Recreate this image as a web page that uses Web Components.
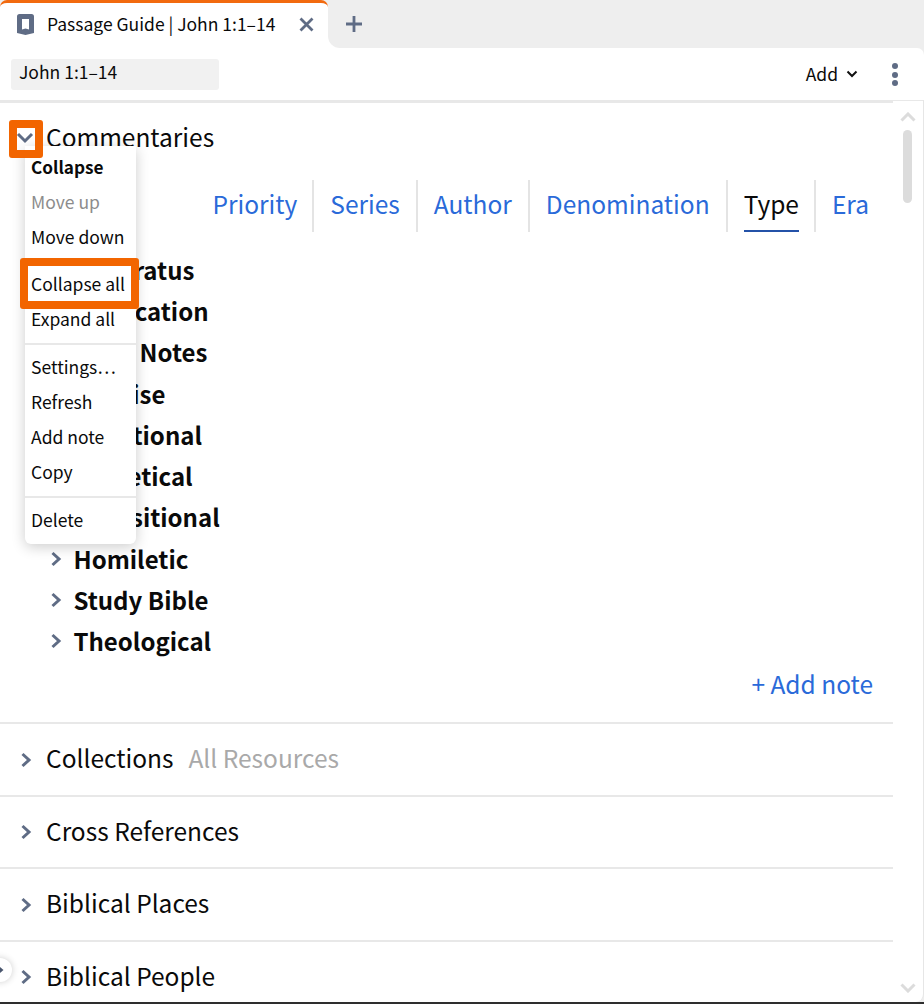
<!DOCTYPE html>
<html lang="en"><head><meta charset="utf-8"><title>Passage Guide</title>
<style>
html,body{margin:0;height:100%;background:#fff}
body{font-family:"Noto Sans CJK SC","Noto Sans",sans-serif;color:#0a0a0a;overflow:hidden}
</style></head><body>
<guide-app>
  <guide-tabbar title-text="Passage Guide | John 1:1–14"></guide-tabbar>
  <guide-toolbar reference="John 1:1–14"></guide-toolbar>
  <guide-scroll>
    <guide-section open label="Commentaries">
      <type-tabs></type-tabs>
      <tree-item>Apparatus</tree-item>
      <tree-item>Application</tree-item>
      <tree-item>Bible Notes</tree-item>
      <tree-item>Concise</tree-item>
      <tree-item>Devotional</tree-item>
      <tree-item>Exegetical</tree-item>
      <tree-item>Expositional</tree-item>
      <tree-item>Homiletic</tree-item>
      <tree-item>Study Bible</tree-item>
      <tree-item>Theological</tree-item>
      <add-note></add-note>
    </guide-section>
    <guide-section label="Collections" note="All Resources"></guide-section>
    <guide-section label="Cross References"></guide-section>
    <guide-section label="Biblical Places"></guide-section>
    <guide-section label="Biblical People"></guide-section>
  </guide-scroll>
  <context-menu></context-menu>
  <focus-ring style="left:9px;top:120px;width:34px;height:38px;--b:8px"></focus-ring>
  <focus-ring style="left:20px;top:258px;width:119px;height:51px;--b:8px"></focus-ring>
  <side-handle></side-handle>
</guide-app>
<script>
const CHEV_R='<svg viewBox="0 0 12 16" width="12" height="16"><path d="M2.500 2 9 8 2.500 14" fill="none" stroke="#5f6c85" stroke-width="3"/></svg>';
const CHEV_D='<svg viewBox="0 0 18 12" width="18" height="12"><path d="M2 2 9 9 16 2" fill="none" stroke="#5f6c85" stroke-width="3"/></svg>';
function def(name,css,html){
  customElements.define(name,class extends HTMLElement{
    constructor(){super();this.attachShadow({mode:'open'})}
    connectedCallback(){
      const h=typeof html==='function'?html(this):html;
      this.shadowRoot.innerHTML='<style>'+css+'</style>'+h;
    }
  });
}
def('guide-app',`:host{display:flex;flex-direction:column;position:relative;width:924px;height:1004px;overflow:hidden;background:#eee}
.end{height:2px;background:#2e2e2e;flex:none}`,`<slot></slot><div class="end"></div>`);

def('guide-tabbar',`:host{display:flex;height:48px;background:#eee;flex:none}
.tab{width:328px;background:#fff;border-top:3px solid #f26a0f;border-radius:7px 7px 0 0;box-sizing:border-box;display:flex;align-items:center;padding:0 14px 3px 17px;position:relative}
.t{font-size:17.500px;line-height:24px;margin-left:13px;white-space:nowrap;flex:1}
.after{flex:1;background:#eee;border-bottom-left-radius:12px;display:flex;align-items:center;padding-left:17px}
.wrap{flex:1;background:#fff;display:flex}
svg{display:block;flex:none}`,
el=>`<div class="tab">
<svg width="17" height="21" viewBox="0 0 17 21"><path fill-rule="evenodd" d="M2.500 0H14.500Q17 0 17 2.500V19L8.500 21 0 19V2.500Q0 0 2.500 0ZM5 5V15.500L8.500 14.500 12 15.500V5Z" fill="#5f6c85"/></svg>
<span class="t">${el.getAttribute('title-text')}</span>
<svg width="15" height="15" viewBox="0 0 15 15"><path d="M1.500 1.500 13.500 13.500M13.500 1.500 1.500 13.500" stroke="#5f6c85" stroke-width="2.800"/></svg></div>
<div class="wrap"><div class="after"><svg width="18" height="18" viewBox="0 0 18 18"><path d="M9 1V17M1 9H17" stroke="#5f6c85" stroke-width="2.800"/></svg></div></div>`);

def('guide-toolbar',`:host{display:flex;align-items:center;height:52px;flex:none;box-sizing:border-box;padding:1px 26px 0 11px;background:#fff;border-top-right-radius:7px}
.ref{width:208px;height:31px;background:#f1f1f1;border-radius:3px;box-sizing:border-box;padding:0 8px;font-size:17.500px;line-height:26px}
.sp{flex:1}
.add{font-size:17.500px;line-height:24px;display:flex;align-items:center;gap:8px;margin-right:34px;padding-bottom:2px}
.dots{display:flex;flex-direction:column;gap:2.500px}
.dots i{width:6px;height:6px;border-radius:50%;background:#5f6c85;display:block}`,
el=>`<div class="ref">${el.getAttribute('reference')}</div><div class="sp"></div>
<div class="add">Add<svg width="12" height="8" viewBox="0 0 12 8"><path d="M1.500 1.500 6 6 10.500 1.500" fill="none" stroke="#111" stroke-width="2"/></svg></div>
<div class="dots"><i></i><i></i><i></i></div>`);

def('guide-scroll',`:host{display:flex;flex:1;min-height:0;border-right:1px solid #e6e6e6;border-radius:0 0 8px 0;background:#fff}
.main{width:893px;flex:none;overflow:hidden;border-top:3px solid #e8e8e8;box-sizing:border-box}
.bar{flex:1;border-top:1px solid #e8e8e8;display:flex;flex-direction:column;align-items:center;box-sizing:border-box;padding:11px 0 9px}
.up,.dn{display:block}
.thumb{width:9px;height:73px;background:#dcdcdc;border-radius:5px;margin-top:8px;margin-right:1px}
.sp{flex:1}`,
`<div class="main"><slot></slot></div><div class="bar">
<svg class="up" width="16" height="10" viewBox="0 0 16 10"><path d="M1.500 8.500 8 2 14.500 8.500" fill="none" stroke="#dcdcdc" stroke-width="3"/></svg>
<div class="thumb"></div><div class="sp"></div>
<svg class="dn" width="16" height="10" viewBox="0 0 16 10"><path d="M1.500 1.500 8 8 14.500 1.500" fill="none" stroke="#dcdcdc" stroke-width="3"/></svg></div>`);

def('guide-section',`:host{display:block;border-bottom:2px solid #e8e8e8}
.h{display:flex;align-items:center;height:67.500px;padding:0 0 3px 20px;font-size:24.500px;line-height:34px;white-space:nowrap}
.icon{width:12px;display:flex;justify-content:center;margin-right:14px;position:relative;top:1.500px}
.n{color:#a9a9a9;margin-left:15px}
:host([open]) .h{height:67px;padding:0 0 2px 16px}
:host([open]) .icon{width:18px;margin-right:12px;top:1.500px}
:host([open]) .body{display:block}
.body{display:none;padding-bottom:21.500px}`,
el=>`<div class="h"><span class="icon">${el.hasAttribute('open')?CHEV_D:CHEV_R}</span><span>${el.getAttribute('label')}</span>${el.getAttribute('note')?`<span class="n">${el.getAttribute('note')}</span>`:''}</div><div class="body"><slot></slot></div>`);

def('type-tabs',`:host{display:flex;justify-content:flex-end;height:52px;padding-right:8px;margin-top:8px;margin-bottom:17px}
.x{font-size:24.500px;line-height:48px;color:#2a6ad9;padding:0 16px;border-left:2px solid #e4e4e4;position:relative;white-space:nowrap}
.x:first-of-type{border-left:0;padding-right:15px}
.a{color:#0a0a0a;padding:0 15px 0 16px}
.a::after{content:"";position:absolute;left:16px;right:15px;bottom:0;height:2px;background:#2452a8}`,
`<span class="x">Priority</span><span class="x">Series</span><span class="x">Author</span><span class="x">Denomination</span><span class="x a">Type</span><span class="x">Era</span>`);

def('tree-item',`:host{display:flex;align-items:center;height:41.300px;padding-left:50px;font-size:24px;font-weight:700;line-height:34px;white-space:nowrap}
.i{width:12px;margin-right:11.500px;display:flex}`,`<span class="i">${CHEV_R}</span><slot></slot>`);

def('add-note',`:host{display:block;text-align:right;padding:5px 20px 0 0;font-size:24.500px;line-height:34px;color:#2a6ad9}`,`+ Add note`);

def('context-menu',`:host{position:absolute;left:25px;top:146px;width:111px;background:#fff;border-radius:0 0 6px 6px;box-shadow:0 3px 14px rgba(0,0,0,.2);font-size:17.500px;line-height:35px;padding:3px 0 6px;box-sizing:border-box;height:398px}
div{padding-left:6px;white-space:nowrap}
.b{font-weight:700;font-size:17.200px}.g{color:#8c8c8c}
hr{border:0;height:2px;background:#e8e8e8;margin:5px 0}
hr.l{margin:7px 0 4px}`,
`<div class="b">Collapse</div><div class="g">Move up</div><div>Move down</div><hr>
<div>Collapse all</div><div>Expand all</div><hr class="l">
<div>Settings…</div><div>Refresh</div><div>Add note</div><div>Copy</div><hr class="l"><div>Delete</div>`);

def('focus-ring',`:host{position:absolute;box-sizing:border-box;border:var(--b) solid #f26500;border-radius:3px}`,``);

def('side-handle',`:host{position:absolute;left:-12px;top:958px;width:24px;height:24px;border-radius:50%;background:#fff;box-shadow:0 0 7px rgba(0,0,0,.2);display:flex;align-items:center;justify-content:flex-end;padding-right:8px;box-sizing:border-box}`,
`<svg width="5" height="8" viewBox="0 0 5 8"><path d="M0 0 4.500 4 0 8Z" fill="#4a566e"/></svg>`);
</script>
</body></html>
